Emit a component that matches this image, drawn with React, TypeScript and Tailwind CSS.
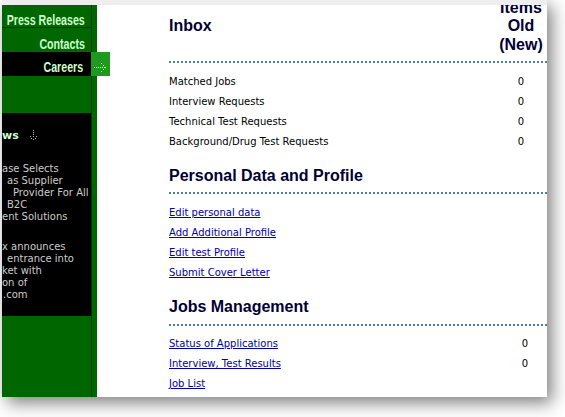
import React from 'react';

const inboxRows = [
  { label: 'Matched Jobs', count: 0 },
  { label: 'Interview Requests', count: 0 },
  { label: 'Technical Test Requests', count: 0 },
  { label: 'Background/Drug Test Requests', count: 0 },
];

const profileLinks = ['Edit personal data', 'Add Additional Profile', 'Edit test Profile', 'Submit Cover Letter'];

const jobRows: { label: string; count?: number }[] = [
  { label: 'Status of Applications', count: 0 },
  { label: 'Interview, Test Results', count: 0 },
  { label: 'Job List' },
];

// visible tail of each news line (the box is cut off at the left)
const newsA = [
  { text: 'ase Selects', pad: 'pl-[0px]' },
  { text: 'as Supplier', pad: 'pl-[5px]' },
  { text: 'Provider For All', pad: 'pl-[11px]' },
  { text: 'B2C', pad: 'pl-[5px]' },
  { text: 'ent Solutions', pad: 'pl-[0px]' },
];
const newsB = [
  { text: 'x announces', pad: 'pl-[0px]' },
  { text: 'entrance into', pad: 'pl-[5px]' },
  { text: 'ket with', pad: 'pl-[0px]' },
  { text: 'on of', pad: 'pl-[0px]' },
  { text: '.com', pad: 'pl-[1px]' },
];

const DottedArrow = () => (
  <svg width="19" height="24" viewBox="0 0 19 24" className="block">
    {[3, 5, 7, 9, 11, 13].map((x) => (
      <rect key={x} x={x} y={15} width="1" height="1" fill="#fff" />
    ))}
    <rect x="10" y="11" width="1" height="1" fill="#fff" />
    <rect x="12" y="13" width="1" height="1" fill="#fff" />
    <rect x="14" y="15" width="1" height="1" fill="#fff" />
    <rect x="12" y="17" width="1" height="1" fill="#fff" />
    <rect x="10" y="19" width="1" height="1" fill="#fff" />
  </svg>
);

const DownIcon = () => (
  <svg width="11" height="11" viewBox="0 0 11 11" className="inline-block ml-[9px]">
    {[0, 2, 4, 6].map((y) => (
      <rect key={y} x={5} y={y} width="1" height="1" fill="#b5b5b5" />
    ))}
    <rect x="2" y="6" width="1" height="1" fill="#b5b5b5" />
    <rect x="3" y="8" width="1" height="1" fill="#b5b5b5" />
    <rect x="5" y="9" width="1" height="1" fill="#b5b5b5" />
    <rect x="7" y="8" width="1" height="1" fill="#b5b5b5" />
    <rect x="8" y="6" width="1" height="1" fill="#b5b5b5" />
  </svg>
);

const navRow = 'flex items-end justify-end whitespace-nowrap';
const navText =
  "inline-block origin-right scale-x-[0.76] font-['Liberation_Sans',Arial,sans-serif] font-bold text-[14px] leading-[14px] text-[#ccffcc]";
const heading = "font-['Liberation_Sans',Arial,sans-serif] font-bold text-[16px] leading-[18.4px] text-[#000033]";
const body = "font-['DejaVu_Sans',Verdana,sans-serif] text-[10px] leading-[20px]";
const divider = 'border-t-2 border-dotted border-[#4f7f9f]';

export default function App() {
  return (
    <div className="w-[565px] h-[417px] bg-white overflow-hidden">
      <div className="ml-[2px] w-[545px] h-[397px] flex flex-col bg-white shadow-[5px_6px_16px_rgba(0,0,0,0.5)]">
        <div className="h-[5px] shrink-0 bg-[#eeeeee]" />
        <div className="flex flex-1 min-h-0 overflow-hidden">
          {/* left nav */}
          <aside className="w-[95px] shrink-0 flex bg-[#006600]">
            <div className="w-[89px] flex flex-col">
              <div className={`h-[23px] border-b border-[#003300] pr-[6px] ${navRow}`}>
                <span className={navText}>Press Releases</span>
              </div>
              <div className={`h-[24px] pr-[6px] pb-[1px] ${navRow}`}>
                <span className={navText}>Contacts</span>
              </div>
              <div className={`relative h-[24px] bg-black pr-[8px] pb-[2px] ${navRow}`}>
                <span className={navText}>Careers</span>
                <div className="absolute left-[89px] top-0 z-10 w-[19px] h-[24px] bg-[#1f9a1f]">
                  <DottedArrow />
                </div>
              </div>
              <div className="h-[37px]" />
              <div className="h-[203px] bg-black overflow-hidden pt-[16px]">
                <div className="flex items-center font-['DejaVu_Sans',Verdana,sans-serif] font-bold text-[11px] leading-[13px] text-[#ccffcc]">
                  <span>ws</span>
                  <DownIcon />
                </div>
                <div className="mt-[21px] font-['DejaVu_Sans',Verdana,sans-serif] text-[10px] leading-[12px] text-[#cccccc] whitespace-nowrap">
                  {newsA.map((l) => (
                    <div key={l.text} className={l.pad}>{l.text}</div>
                  ))}
                  <div className="mt-[18px]">
                    {newsB.map((l) => (
                      <div key={l.text} className={l.pad}>{l.text}</div>
                    ))}
                  </div>
                </div>
              </div>
            </div>
            <div className="w-[1px] bg-[#003300]" />
          </aside>

          {/* main */}
          <main className="flex-1 min-w-0 pl-[72px] mt-[-6px] flex flex-col">
            <div className="flex items-center justify-between pr-[3px]">
              <h2 className={heading}>Inbox</h2>
              <div className={`w-[46px] text-center ${heading}`}>
                <div>Items</div>
                <div>Old</div>
                <div>(New)</div>
              </div>
            </div>
            <div className={`mt-[7px] ${divider}`} />
            <div className="mt-[9px]">
              {inboxRows.map((r) => (
                <div key={r.label} className={`flex justify-between pr-[3px] text-black ${body}`}>
                  <span>{r.label}</span>
                  <span className="w-[46px] text-center">{r.count}</span>
                </div>
              ))}
            </div>

            <h2 className={`mt-[15px] ${heading}`}>Personal Data and Profile</h2>
            <div className={`mt-[6px] ${divider}`} />
            <div className="mt-[9px] flex flex-col items-start">
              {profileLinks.map((t) => (
                <a key={t} href="#" className={`underline text-[#0000a0] ${body}`}>
                  {t}
                </a>
              ))}
            </div>

            <h2 className={`mt-[15px] ${heading}`}>Jobs Management</h2>
            <div className={`mt-[8px] ${divider}`} />
            <div className="mt-[8px]">
              {jobRows.map((r) => (
                <div key={r.label} className={`flex justify-between pr-[3px] ${body}`}>
                  <a href="#" className="underline text-[#0000a0]">{r.label}</a>
                  <span className="w-[38px] text-center text-black">{r.count ?? ''}</span>
                </div>
              ))}
            </div>
          </main>
        </div>
      </div>
    </div>
  );
}
